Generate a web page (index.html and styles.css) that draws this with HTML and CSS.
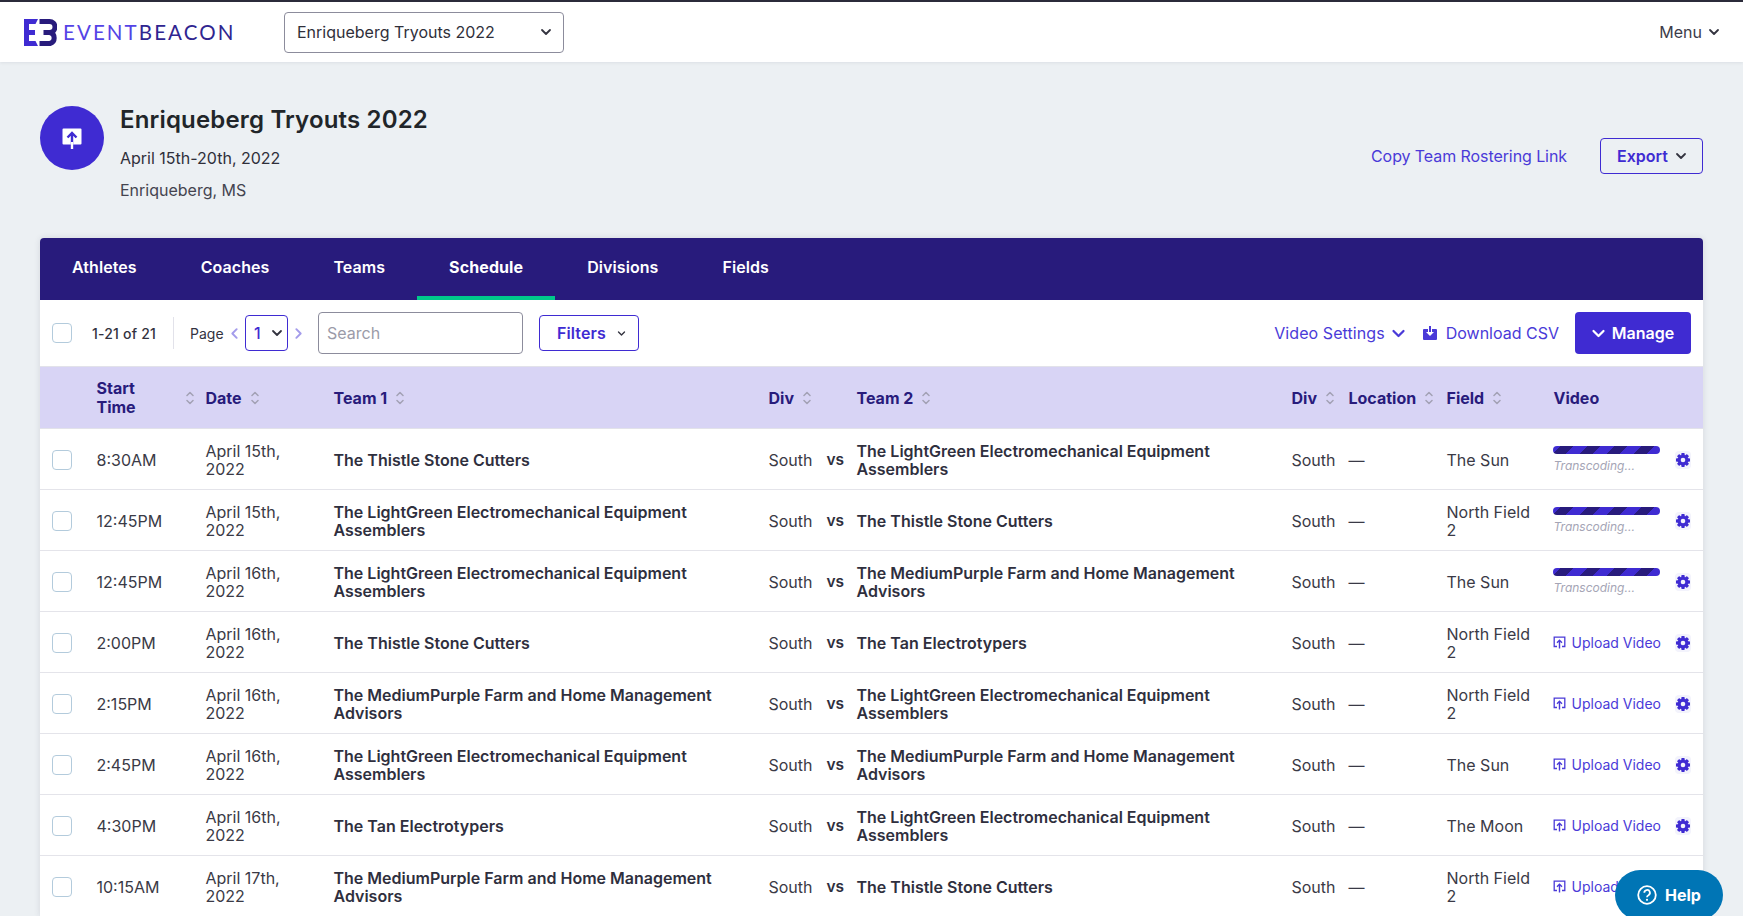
FILE: index.html
```html
<!DOCTYPE html>
<html lang="en">
<head>
<meta charset="utf-8">
<title>Enriqueberg Tryouts 2022 - Schedule</title>
<link rel="stylesheet" href="styles.css">
</head>
<body>
<svg class="defs" width="0" height="0" aria-hidden="true">
  <symbol id="chev" viewBox="0 0 12 12"><path d="M2 4l4 4 4-4" fill="none" stroke="currentColor" stroke-width="1.8" stroke-linecap="round" stroke-linejoin="round"/></symbol>
  <symbol id="sort" viewBox="0 0 8 16"><path d="M1 5.5l3-3 3 3M1 10.5l3 3 3-3" fill="none" stroke="#a3a1b5" stroke-width="1.5" stroke-linecap="round" stroke-linejoin="round"/></symbol>
  <symbol id="gear" viewBox="0 0 16 16">
    <g fill="#3f2bd2">
      <rect x="6.300" y="1" width="3.400" height="14" rx=".8"/>
      <rect x="6.300" y="1" width="3.400" height="14" rx=".8" transform="rotate(45 8 8)"/>
      <rect x="6.300" y="1" width="3.400" height="14" rx=".8" transform="rotate(90 8 8)"/>
      <rect x="6.300" y="1" width="3.400" height="14" rx=".8" transform="rotate(135 8 8)"/>
      <circle cx="8" cy="8" r="5.300"/>
    </g>
    <circle cx="8" cy="8" r="2.300" fill="#f3f3fc"/>
  </symbol>
  <symbol id="upload" viewBox="0 0 13 13"><path d="M4 10.5H1.2V1.2h10.6v9.3H9" fill="none" stroke="currentColor" stroke-width="1.3"/><path d="M6.5 12.5V4.5M4 6.8l2.5-2.5L9 6.8" fill="none" stroke="currentColor" stroke-width="1.4"/></symbol>
</svg>
<div class="page">
  <header class="topbar">
    <div class="brand">
      <svg class="brand-mark" viewBox="0 0 33 27" aria-hidden="true">
        <path d="M0 0H14L11.5 5H5V11H11V16H5V22H11.5L14 27H0Z" fill="#3f2bd2"/>
        <path d="M15.5 2.5H25.5a5.5 5.5 0 0 1 0 11H19.5M19.5 13.5H26a5.7 5.7 0 0 1 0 11H15.5" fill="none" stroke="#281b7c" stroke-width="5"/>
      </svg>
      <span class="brand-name"><span class="brand-event">EVENT</span><span class="brand-beacon">BEACON</span></span>
    </div>
    <div class="event-select"><span>Enriqueberg Tryouts 2022</span><svg class="chev"><use href="#chev"/></svg></div>
    <div class="menu"><span>Menu</span><svg class="chev"><use href="#chev"/></svg></div>
  </header>

  <main class="content">
    <section class="event">
      <div class="event-avatar">
        <svg viewBox="0 0 20 24" aria-hidden="true"><path d="M1.5 2.5h17a1 1 0 0 1 1 1v14a1 1 0 0 1-1 1h-7.4V23H8.9v-4.5H1.500a1 1 0 0 1-1-1v-14a1 1 0 0 1 1-1z" fill="#fff"/><path d="M10 18.500V7M5.500 11.500L10 7l4.500 4.500" fill="none" stroke="#3f2bd2" stroke-width="2.400"/><path d="M10 16V23" stroke="#fff" stroke-width="2.200"/></svg>
      </div>
      <div class="event-info">
        <h1>Enriqueberg Tryouts 2022</h1>
        <p>April 15th-20th, 2022</p>
        <p class="muted">Enriqueberg, MS</p>
      </div>
      <div class="event-actions">
        <a class="link copy">Copy Team Rostering Link</a>
        <button class="btn-outline export">Export<svg class="chev"><use href="#chev"/></svg></button>
      </div>
    </section>

    <section class="card">
      <nav class="tabs">
        <a class="tab">Athletes</a>
        <a class="tab">Coaches</a>
        <a class="tab">Teams</a>
        <a class="tab active">Schedule</a>
        <a class="tab">Divisions</a>
        <a class="tab">Fields</a>
      </nav>

      <div class="toolbar">
        <span class="check"></span>
        <span class="count">1-21 of 21</span>
        <span class="divider"></span>
        <span class="page-label">Page</span>
        <svg class="pager"><use href="#chev"/></svg>
        <div class="page-select"><span>1</span><svg class="chev"><use href="#chev"/></svg></div>
        <svg class="pager next"><use href="#chev"/></svg>
        <input class="search" placeholder="Search">
        <button class="btn-outline filters">Filters<svg class="chev small"><use href="#chev"/></svg></button>
        <div class="toolbar-right">
          <a class="link video-settings">Video Settings<svg class="chev wide"><use href="#chev"/></svg></a>
          <a class="link download">
            <svg viewBox="0 0 14 14" aria-hidden="true"><path d="M1 3h4v3H3l4 4 4-4H9V3h4a1 1 0 0 1 1 1v9a1 1 0 0 1-1 1H1a1 1 0 0 1-1-1V4a1 1 0 0 1 1-1z" fill="currentColor"/><rect x="6" y="0" width="2" height="6" fill="currentColor"/></svg>
            Download CSV</a>
          <button class="btn-solid"><svg class="chev wide"><use href="#chev"/></svg>Manage</button>
        </div>
      </div>

      <table class="schedule">
        <colgroup>
          <col class="c-check"><col class="c-time"><col class="c-date"><col class="c-team"><col class="c-div"><col class="c-vs"><col class="c-team"><col class="c-div2"><col class="c-loc"><col class="c-field"><col class="c-video">
        </colgroup>
        <thead>
          <tr>
            <th></th>
            <th><div class="th-in spread"><span class="th-wrap">Start Time</span><svg class="sort"><use href="#sort"/></svg></div></th>
            <th><div class="th-in">Date<svg class="sort"><use href="#sort"/></svg></div></th>
            <th><div class="th-in">Team 1<svg class="sort"><use href="#sort"/></svg></div></th>
            <th><div class="th-in">Div<svg class="sort"><use href="#sort"/></svg></div></th>
            <th></th>
            <th><div class="th-in">Team 2<svg class="sort"><use href="#sort"/></svg></div></th>
            <th><div class="th-in">Div<svg class="sort"><use href="#sort"/></svg></div></th>
            <th><div class="th-in">Location<svg class="sort"><use href="#sort"/></svg></div></th>
            <th><div class="th-in">Field<svg class="sort"><use href="#sort"/></svg></div></th>
            <th class="th-video">Video</th>
          </tr>
        </thead>
        <tbody>
          <tr>
            <td><span class="check"></span></td><td>8:30AM</td><td class="wrap">April 15th, 2022</td>
            <td class="team">The Thistle Stone Cutters</td><td>South</td><td class="vs">vs</td>
            <td class="team">The LightGreen Electromechanical Equipment Assemblers</td><td>South</td><td>—</td><td class="wrap">The Sun</td>
            <td><div class="video"><div class="progress-wrap"><div class="progress"></div><div class="transcoding">Transcoding...</div></div><span class="gear"><svg><use href="#gear"/></svg></span></div></td>
          </tr>
          <tr>
            <td><span class="check"></span></td><td>12:45PM</td><td class="wrap">April 15th, 2022</td>
            <td class="team">The LightGreen Electromechanical Equipment Assemblers</td><td>South</td><td class="vs">vs</td>
            <td class="team">The Thistle Stone Cutters</td><td>South</td><td>—</td><td class="wrap">North Field 2</td>
            <td><div class="video"><div class="progress-wrap"><div class="progress"></div><div class="transcoding">Transcoding...</div></div><span class="gear"><svg><use href="#gear"/></svg></span></div></td>
          </tr>
          <tr>
            <td><span class="check"></span></td><td>12:45PM</td><td class="wrap">April 16th, 2022</td>
            <td class="team">The LightGreen Electromechanical Equipment Assemblers</td><td>South</td><td class="vs">vs</td>
            <td class="team">The MediumPurple Farm and Home Management Advisors</td><td>South</td><td>—</td><td class="wrap">The Sun</td>
            <td><div class="video"><div class="progress-wrap"><div class="progress"></div><div class="transcoding">Transcoding...</div></div><span class="gear"><svg><use href="#gear"/></svg></span></div></td>
          </tr>
          <tr>
            <td><span class="check"></span></td><td>2:00PM</td><td class="wrap">April 16th, 2022</td>
            <td class="team">The Thistle Stone Cutters</td><td>South</td><td class="vs">vs</td>
            <td class="team">The Tan Electrotypers</td><td>South</td><td>—</td><td class="wrap">North Field 2</td>
            <td><div class="video"><a class="upload"><svg><use href="#upload"/></svg>Upload Video</a><span class="gear"><svg><use href="#gear"/></svg></span></div></td>
          </tr>
          <tr>
            <td><span class="check"></span></td><td>2:15PM</td><td class="wrap">April 16th, 2022</td>
            <td class="team">The MediumPurple Farm and Home Management Advisors</td><td>South</td><td class="vs">vs</td>
            <td class="team">The LightGreen Electromechanical Equipment Assemblers</td><td>South</td><td>—</td><td class="wrap">North Field 2</td>
            <td><div class="video"><a class="upload"><svg><use href="#upload"/></svg>Upload Video</a><span class="gear"><svg><use href="#gear"/></svg></span></div></td>
          </tr>
          <tr>
            <td><span class="check"></span></td><td>2:45PM</td><td class="wrap">April 16th, 2022</td>
            <td class="team">The LightGreen Electromechanical Equipment Assemblers</td><td>South</td><td class="vs">vs</td>
            <td class="team">The MediumPurple Farm and Home Management Advisors</td><td>South</td><td>—</td><td class="wrap">The Sun</td>
            <td><div class="video"><a class="upload"><svg><use href="#upload"/></svg>Upload Video</a><span class="gear"><svg><use href="#gear"/></svg></span></div></td>
          </tr>
          <tr>
            <td><span class="check"></span></td><td>4:30PM</td><td class="wrap">April 16th, 2022</td>
            <td class="team">The Tan Electrotypers</td><td>South</td><td class="vs">vs</td>
            <td class="team">The LightGreen Electromechanical Equipment Assemblers</td><td>South</td><td>—</td><td class="wrap">The Moon</td>
            <td><div class="video"><a class="upload"><svg><use href="#upload"/></svg>Upload Video</a><span class="gear"><svg><use href="#gear"/></svg></span></div></td>
          </tr>
          <tr>
            <td><span class="check"></span></td><td>10:15AM</td><td class="wrap">April 17th, 2022</td>
            <td class="team">The MediumPurple Farm and Home Management Advisors</td><td>South</td><td class="vs">vs</td>
            <td class="team">The Thistle Stone Cutters</td><td>South</td><td>—</td><td class="wrap">North Field 2</td>
            <td><div class="video"><a class="upload"><svg><use href="#upload"/></svg>Upload Video</a><span class="gear"><svg><use href="#gear"/></svg></span></div></td>
          </tr>
        </tbody>
      </table>
    </section>
  </main>

  <button class="help">
    <svg viewBox="0 0 20 20" aria-hidden="true"><circle cx="10" cy="10" r="8.800" fill="none" stroke="#fff" stroke-width="1.800"/><path d="M7.300 7.800a2.800 2.800 0 1 1 4.200 2.400c-1 .6-1.500 1-1.500 2" fill="none" stroke="#fff" stroke-width="1.800"/><circle cx="10" cy="14.800" r="1.100" fill="#fff"/></svg>
    Help
  </button>
</div>
</body>
</html>
```
FILE: styles.css
```css
* { box-sizing: border-box; }
html, body { margin: 0; height: 916px; overflow: hidden; background: #fff; }
body { font-family: Inter, "Liberation Sans", sans-serif; font-size: 16px; color: #33333f; }
.defs { position: absolute; }
.page { width: 1743px; height: 916px; background: #ecf0f3; overflow: hidden; position: relative; }

.topbar { height: 62px; background: #fff; border-top: 2px solid #2b2b3a; display: flex; align-items: center; padding: 0 24px; box-shadow: 0 1px 3px rgba(40,40,70,.08); position: relative; }
.brand { display: flex; align-items: center; width: 260px; flex: none; }
.brand-mark { width: 33px; height: 27px; flex: none; }
.brand-name { margin-left: 6px; font-family: Lato, Inter, sans-serif; font-size: 20.500px; letter-spacing: 2.100px; line-height: 1; }
.brand-event { color: #5443e6; }
.brand-beacon { color: #2f2590; }
.event-select { width: 280px; height: 41px; border: 1px solid #8c8c9c; border-radius: 4px; display: flex; align-items: center; justify-content: space-between; padding: 0 11px 0 12px; color: #2f2f3a; }
.chev { width: 12px; height: 12px; flex: none; color: #33333f; }
.menu { margin-left: auto; margin-right: -1px; display: flex; align-items: center; gap: 6px; color: #3c3c4a; }

.content { padding: 44px 40px 0; }
.event { display: flex; align-items: center; margin-bottom: 32px; }
.event-avatar { width: 64px; height: 64px; border-radius: 50%; background: #3f2bd2; display: flex; align-items: center; justify-content: center; align-self: flex-start; flex: none; }
.event-avatar svg { width: 20px; height: 24px; }
.event-info { margin-left: 16px; }
.event-info h1 { margin: 0 0 8px; font-size: 24px; font-weight: 600; line-height: 28px; letter-spacing: .17px; color: #212529; }
.event-info p { margin: 0; line-height: 32px; color: #2f2f3a; }
.event-info .muted { color: #44444f; }
.event-actions { margin-left: auto; display: flex; align-items: center; gap: 33px; }
.link { color: #4a3ad8; display: inline-flex; align-items: center; }
.copy { letter-spacing: -.08px; }

.btn-outline { font: inherit; font-weight: 600; color: #3f2bd2; background: transparent; border: 1px solid #3f2bd2; border-radius: 4px; height: 36px; display: inline-flex; align-items: center; padding: 0; }
.export { width: 103px; padding-left: 16px; gap: 7px; }
.filters { width: 100px; padding-left: 17px; gap: 11px; background: #fff; letter-spacing: .1px; }
.chev.small { width: 9px; height: 9px; }

.card { background: #fff; border-radius: 4px 4px 0 0; box-shadow: 0 0 6px rgba(40,40,70,.12); }
.tabs { height: 62px; background: #281b7c; border-radius: 4px 4px 0 0; display: flex; }
.tab { padding: 0 32px; line-height: 58px; height: 62px; color: #fff; font-weight: 600; letter-spacing: .07px; border-bottom: 4px solid transparent; }
.tab.active { font-weight: 700; letter-spacing: .1px; border-bottom-color: #00c98b; }

.toolbar { height: 67px; display: flex; align-items: center; padding: 0 12px; border-bottom: 1px solid #e2e2ea; }
.check { display: block; width: 20px; height: 20px; border: 1px solid #b3cbdc; border-radius: 4px; background: #fff; flex: none; }
.count { margin-left: 20px; font-size: 14px; font-weight: 500; letter-spacing: .2px; color: #33333f; width: 81px; flex: none; white-space: nowrap; }
.divider { width: 1px; height: 32px; background: #e2e2ea; flex: none; }
.page-label { margin-left: 16px; font-size: 14px; color: #33333f; width: 36px; flex: none; }
.pager { width: 13px; height: 13px; color: #a49ceb; transform: rotate(90deg); flex: none; margin-left: 2px; }
.pager.next { transform: rotate(-90deg); margin-left: 4px; }
.page-select { width: 43px; height: 36px; margin-left: 4px; border: 1px solid #3f2bd2; border-radius: 4px; display: flex; align-items: center; justify-content: space-between; padding: 0 4px 0 8px; color: #3f2bd2; font-size: 16px; font-weight: 500; flex: none; }
.search { width: 205px; height: 42px; margin-left: 13px; border: 1px solid #8c8c9c; border-radius: 4px; padding: 0 8px; font: inherit; outline: none; flex: none; }
.search::placeholder { color: #9b9ba8; opacity: 1; }
.filters { margin-left: 16px; flex: none; }
.toolbar-right { margin-left: auto; display: flex; align-items: center; }
.video-settings { gap: 6px; letter-spacing: .08px; }
.chev.wide { width: 15px; height: 15px; color: currentColor; }
.download { margin-left: 17px; gap: 9px; }
.download svg { width: 14px; height: 14px; }
.btn-solid { font: inherit; font-weight: 600; margin-left: 16px; width: 116px; height: 42px; background: #3f2bd2; color: #fff; border: 0; border-radius: 4px; display: inline-flex; align-items: center; justify-content: center; gap: 6px; padding-left: 5px; }

.schedule { width: 100%; table-layout: fixed; border-collapse: collapse; }
.c-check { width: 56.500px; } .c-time { width: 109px; } .c-date { width: 128px; } .c-team { width: 435px; }
.c-div { width: 58px; } .c-vs { width: 30px; } .c-div2 { width: 57px; } .c-loc { width: 98px; } .c-field { width: 106px; } .c-video { width: 150.500px; }
.schedule th { height: 61px; padding: 2px 0 0; background: #d8d4f5; color: #281b7c; font-weight: 700; line-height: 19px; text-align: left; border-bottom: 1px solid #e2e2ea; }
.schedule th.th-video { padding-left: 1px; }
.th-in { display: flex; align-items: center; gap: 9px; }
.th-in.spread { justify-content: space-between; padding-right: 12px; }
.th-wrap { width: 50px; }
.sort { width: 8px; height: 16px; flex: none; }
.schedule td { height: 61px; padding: 2px 0 0; line-height: 18px; color: #3a3a46; border-bottom: 1px solid #e4e4ea; }
.schedule td:first-child { padding-left: 12px; }
.schedule td.wrap { padding-right: 20px; }
.schedule td.team { font-weight: 600; color: #2f2f3e; padding-right: 10px; }
.schedule td.vs { font-weight: 600; font-size: 15.500px; color: #2f2f3e; }

.video { display: flex; align-items: center; justify-content: space-between; padding-right: 12px; }
.progress-wrap { width: 107px; }
.progress { height: 8px; border-radius: 4px; background: repeating-linear-gradient(-45deg, #3f2bd2 0, #3f2bd2 9.500px, #281b7c 9.500px, #281b7c 19px); }
.transcoding { margin: 5px 0 0 1px; font-size: 12px; line-height: 14px; font-style: italic; color: #a5a5b5; }
.upload { display: flex; align-items: center; font-size: 14px; color: #4a3ad8; gap: 6px; white-space: nowrap; }
.upload svg { width: 13px; height: 13px; }
.gear { width: 16px; height: 18px; background: #f3f3fc; border-radius: 4px; display: flex; align-items: center; justify-content: center; flex: none; }
.gear svg { width: 16px; height: 16px; }

.help { position: fixed; left: 1615px; top: 870px; width: 108px; height: 50px; border: 0; border-radius: 25px; background: #0075b5; color: #fff; font: inherit; font-weight: 700; display: flex; align-items: center; gap: 8px; padding-left: 22px; }
.help svg { width: 20px; height: 20px; flex: none; }
```
